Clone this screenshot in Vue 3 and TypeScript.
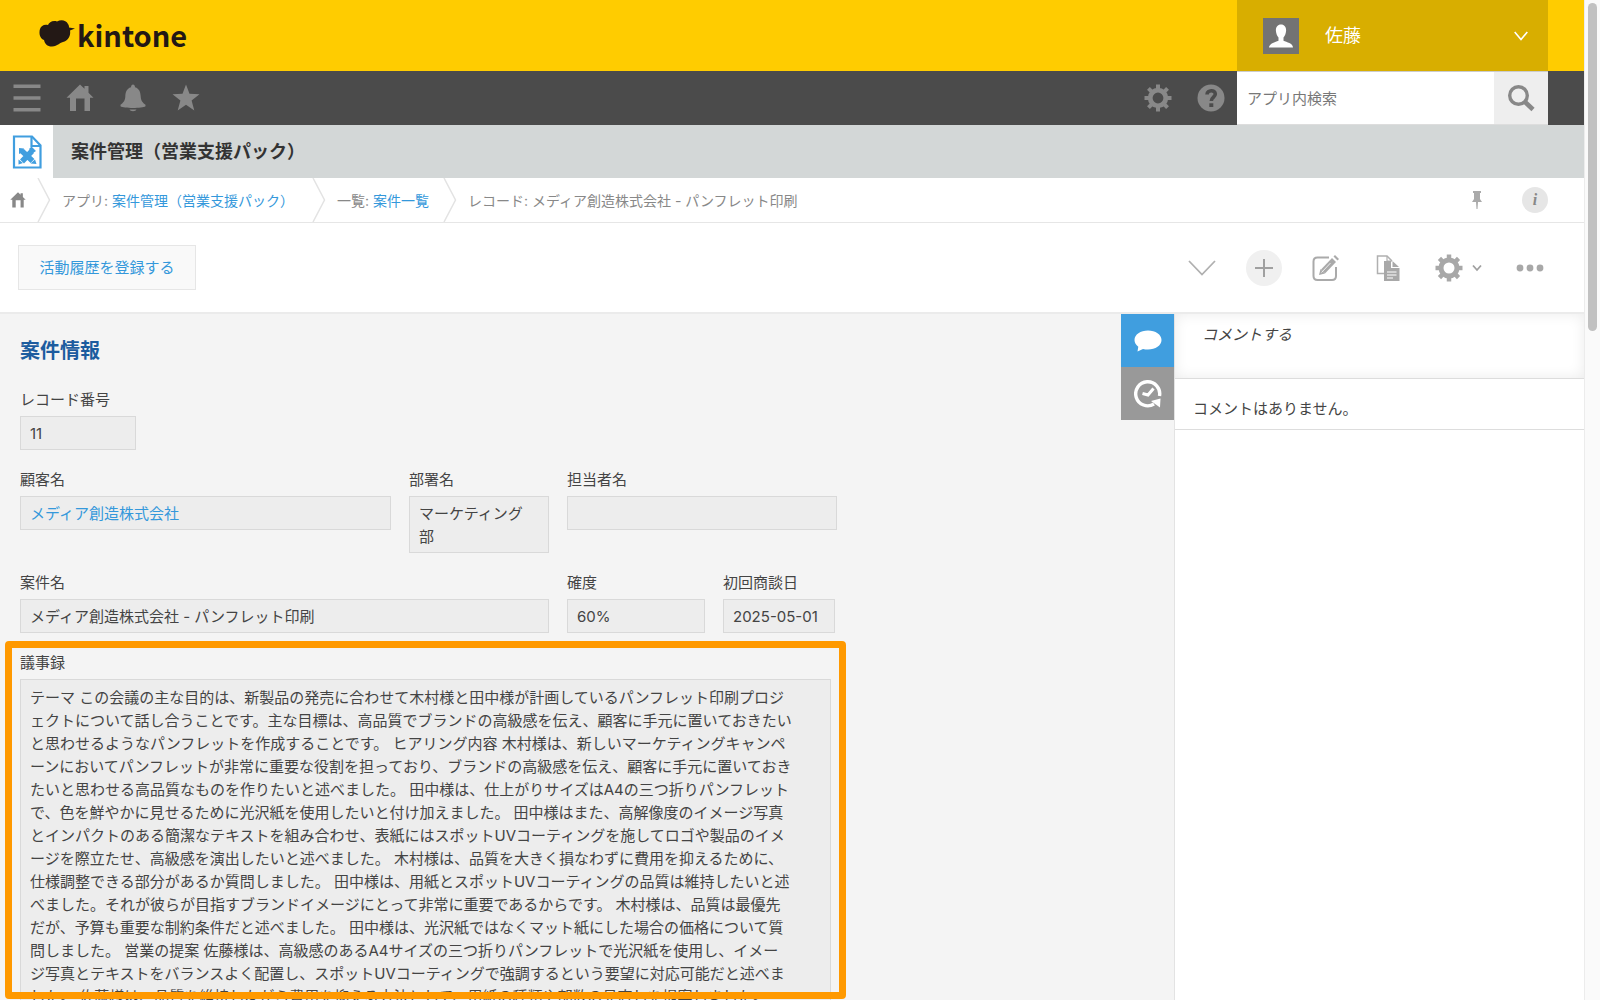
<script setup lang="ts">
import { ref } from 'vue'

interface Field {
  id: string
  label: string
  value: string
  size: string
  link?: boolean
}

const query = ref('')
const comment = ref('')
const teeth = [0, 45, 90, 135, 180, 225, 270, 315]

const rows: Field[][] = [
  [{ id: 'no', label: 'レコード番号', value: '11', size: 'w-number' }],
  [
    { id: 'customer', label: '顧客名', value: 'メディア創造株式会社', size: 'w-customer', link: true },
    { id: 'dept', label: '部署名', value: 'マーケティング部', size: 'w-dept' },
    { id: 'person', label: '担当者名', value: '', size: 'w-person' },
  ],
  [
    { id: 'deal', label: '案件名', value: 'メディア創造株式会社 - パンフレット印刷', size: 'w-deal' },
    { id: 'rate', label: '確度', value: '60%', size: 'w-rate' },
    { id: 'date', label: '初回商談日', value: '2025-05-01', size: 'w-date' },
  ],
]

const minutes: string[] = [
  'テーマ この会議の主な目的は、新製品の発売に合わせて木村様と田中様が計画しているパンフレット印刷プロジ',
  'ェクトについて話し合うことです。主な目標は、高品質でブランドの高級感を伝え、顧客に手元に置いておきたい',
  'と思わせるようなパンフレットを作成することです。 ヒアリング内容 木村様は、新しいマーケティングキャンペ',
  'ーンにおいてパンフレットが非常に重要な役割を担っており、ブランドの高級感を伝え、顧客に手元に置いておき',
  'たいと思わせる高品質なものを作りたいと述べました。 田中様は、仕上がりサイズはA4の三つ折りパンフレット',
  'で、色を鮮やかに見せるために光沢紙を使用したいと付け加えました。 田中様はまた、高解像度のイメージ写真',
  'とインパクトのある簡潔なテキストを組み合わせ、表紙にはスポットUVコーティングを施してロゴや製品のイメ',
  'ージを際立たせ、高級感を演出したいと述べました。 木村様は、品質を大きく損なわずに費用を抑えるために、',
  '仕様調整できる部分があるか質問しました。 田中様は、用紙とスポットUVコーティングの品質は維持したいと述',
  'べました。それが彼らが目指すブランドイメージにとって非常に重要であるからです。 木村様は、品質は最優先',
  'だが、予算も重要な制約条件だと述べました。 田中様は、光沢紙ではなくマット紙にした場合の価格について質',
  '問しました。 営業の提案 佐藤様は、高級感のあるA4サイズの三つ折りパンフレットで光沢紙を使用し、イメー',
  'ジ写真とテキストをバランスよく配置し、スポットUVコーティングで強調するという要望に対応可能だと述べま',
  'した。 佐藤様は、品質を維持しながら費用を抑える方法として、用紙の種類や部数の見直しを提案しました。',
]
</script>

<template>
  <div class="window">
    <div class="page">
      <header class="brand-bar">
        <a class="logo" href="#">
          <svg width="36" height="28" viewBox="0 0 36 28" aria-hidden="true">
            <path fill="#231815" d="M9 5C10 2 14 0 18 1.500C22-.5 27 0 29 4C30 5.500 30 6.500 30 7.500L36 8.500L31 10.500C32 16 29 21 24 22C20 23 19 26 13 26.500C8 26.500 6 24 5 20C0 18 0 12 1 9C2 6 5 4 9 5Z" />
          </svg>
          <span>kintone</span>
        </a>
        <button class="user" type="button">
          <svg class="avatar" width="36" height="36" viewBox="0 0 36 36" aria-hidden="true">
            <rect width="36" height="36" fill="#737373" />
            <path fill="#fff" d="M18 6.500c3.500 0 5.300 2.800 5.100 6.300c-.2 3-1.300 5.300-2.600 6.800v3.200c3.200 1.500 9.300 2.400 9.500 6.700H6c.2-4.300 6.300-5.200 9.500-6.700v-3.200c-1.300-1.500-2.400-3.800-2.600-6.800c-.2-3.500 1.600-6.300 5.100-6.300z" />
          </svg>
          <span class="user-name">佐藤</span>
          <svg width="14" height="10" viewBox="0 0 14 10" fill="none" stroke="#fff" stroke-width="1.600" aria-hidden="true"><path d="M.7 1l6.300 7.500l6.300-7.500" /></svg>
        </button>
      </header>

      <nav class="global-nav">
        <button type="button" aria-label="メニュー">
          <svg width="28" height="28" viewBox="0 0 28 28" stroke="#888" stroke-width="3.600"><path d="M.5 2.300h27M.5 14h27M.5 25.700h27" /></svg>
        </button>
        <button type="button" aria-label="ホーム">
          <svg width="28" height="28" viewBox="0 0 28 28" fill="#888"><path d="M14 .5l4.500 4.300V2h4v6.700l5 5h-3.500V27h-5.500V14.500h-8.500V27H4V13.700H.5z" /></svg>
        </button>
        <button type="button" aria-label="通知">
          <svg width="28" height="28" viewBox="0 0 28 28" fill="#888"><path d="M12 3.200c0-3.600 4-3.600 4 0c4.500 1.300 5.500 5 5.700 9.300c.2 4.500 2 6 4.800 8.300v1.500c-3 2.300-22 2.300-25 0v-1.500c2.800-2.300 4.600-3.800 4.800-8.300C6.500 8.200 7.500 4.500 12 3.200zM10.500 25.500h7c-1 2.300-6 2.300-7 0z" /></svg>
        </button>
        <button type="button" aria-label="お気に入り">
          <svg width="28" height="28" viewBox="0 0 28 28" fill="#888"><path d="M14 .5l3.500 9.300l10 .4l-7.900 6.200l2.700 10.100L14 20.700l-8.300 5.800l2.700-10.100L.5 10.200l10-.4z" /></svg>
        </button>
        <span class="spacer"></span>
        <button type="button" aria-label="設定">
          <svg width="28" height="28" viewBox="0 0 28 28">
            <circle cx="14" cy="14" r="7.800" fill="none" stroke="#888" stroke-width="4.800" />
            <path v-for="a in teeth" :key="a" d="M14 .5v4.500" stroke="#888" stroke-width="4" :transform="`rotate(${a} 14 14)`" />
          </svg>
        </button>
        <button type="button" aria-label="ヘルプ">
          <svg width="28" height="28" viewBox="0 0 28 28"><circle cx="14" cy="14" r="13.500" fill="#888" /><path d="M10 10.500c.2-5 8.300-5 8.300-.5c0 3-4 3.200-4 7" fill="none" stroke="#4b4b4b" stroke-width="3.600" /><path d="M12.300 19.300h4v3.700h-4z" fill="#4b4b4b" /></svg>
        </button>
        <form class="search" role="search" @submit.prevent>
          <input v-model="query" type="text" placeholder="アプリ内検索" aria-label="アプリ内検索" />
          <button type="submit" aria-label="検索">
            <svg width="28" height="28" viewBox="0 0 28 28" fill="none" stroke="#888"><circle cx="11.500" cy="11.500" r="8.800" stroke-width="3.400" /><path d="M17.500 17.500l8.500 8" stroke-width="4.600" /></svg>
          </button>
        </form>
      </nav>

      <div class="app-title">
        <span class="app-icon">
          <svg width="30" height="34" viewBox="0 0 30 34" fill="none" aria-hidden="true">
            <path d="M2 1.500h18l8.500 9v22H2z" fill="#fff" stroke="#409edf" stroke-width="2.200" />
            <path d="M19.500 1.500v9.500h9" stroke="#409edf" stroke-width="2.200" />
            <path d="M10 16l10.500 10M20 16L10 26.500" stroke="#409edf" stroke-width="5.500" />
            <path d="M7 13l5 .5-1 3.500-4 2zM19.500 11.500l4.500 4.500-3 2-4-4zM6.500 24.500l4.500 3.500-4.500 1.500zM18.500 28.500l4.500-4 1.500 4.500z" fill="#409edf" />
          </svg>
        </span>
        <h1>案件管理（営業支援パック）</h1>
      </div>

      <nav class="crumbs" aria-label="パンくず">
        <a class="crumb-home" href="#" aria-label="ホーム">
          <svg width="16" height="16" viewBox="0 0 28 28" fill="#888"><path d="M14 .5l4.500 4.300V2h4v6.700l5 5h-3.500V27h-5.500V14.500h-8.500V27H4V13.700H.5z" /></svg>
        </a>
        <svg class="sep" width="14" height="44" viewBox="0 0 14 44"><path d="M1 0l11.500 22L1 44" fill="none" stroke="#e3e3e3" stroke-width="1.500" /></svg>
        <span class="crumb crumb-app">アプリ: <a href="#">案件管理（営業支援パック）</a></span>
        <svg class="sep" width="14" height="44" viewBox="0 0 14 44"><path d="M1 0l11.500 22L1 44" fill="none" stroke="#e3e3e3" stroke-width="1.500" /></svg>
        <span class="crumb">一覧: <a href="#">案件一覧</a></span>
        <svg class="sep" width="14" height="44" viewBox="0 0 14 44"><path d="M1 0l11.500 22L1 44" fill="none" stroke="#e3e3e3" stroke-width="1.500" /></svg>
        <span class="crumb">レコード: メディア創造株式会社 - パンフレット印刷</span>
        <span class="spacer"></span>
        <button class="pin" type="button" aria-label="固定">
          <svg width="10" height="18" viewBox="0 0 10 18" fill="#aaa"><path d="M1 0h8v2H8v6l2 3H6l-.5 7h-1L4 11H0l2-3V2H1z" /></svg>
        </button>
        <button class="info" type="button" aria-label="情報">i</button>
      </nav>

      <div class="toolbar">
        <button class="register" type="button">活動履歴を登録する</button>
        <span class="spacer"></span>
        <div class="actions">
          <button type="button" aria-label="次のレコード">
            <svg width="28" height="16" viewBox="0 0 28 16" fill="none" stroke="#b0b0b0" stroke-width="1.800"><path d="M1 1l13 13.500L27 1" /></svg>
          </button>
          <button class="add" type="button" aria-label="レコードを追加">
            <svg width="18" height="18" viewBox="0 0 18 18" stroke="#a0a0a0" stroke-width="2"><path d="M9 0v18M0 9h18" /></svg>
          </button>
          <button type="button" aria-label="編集">
            <svg width="28" height="28" viewBox="0 0 28 28" fill="none" stroke="#aaa"><path d="M17 3.500H5.500q-4 0-4 4V22q0 4 4 4H20q4 0 4-4V13" stroke-width="2" /><path d="M11 17.500L22 6" stroke-width="5.500" /><path d="M7 21l1.500-6 4.500 4.500z" fill="#aaa" stroke="none" /><path d="M23 1l4 4-1.500 1.500-4-4z" fill="#aaa" stroke="none" /><path d="M9.500 18.500l9-9.500" stroke="#fff" stroke-width=".8" /></svg>
          </button>
          <button type="button" aria-label="複製">
            <svg width="24" height="26" viewBox="0 0 24 26"><path d="M8 18.500H1.500V1h9.500l5 5" fill="none" stroke="#b0b0b0" stroke-width="1.500" /><path d="M11 1v5h5" fill="none" stroke="#b0b0b0" stroke-width="1.200" /><path d="M8 6h7v7h8.500v13H8z" fill="#a8a8a8" /><path d="M16.500 6l6.500 6h-6.500z" fill="#a8a8a8" /><path d="M11 17h9.500M11 20h9.500M11 23h6" stroke="#fff" stroke-width="1" /></svg>
          </button>
          <button class="settings" type="button" aria-label="アプリの設定">
            <svg width="28" height="28" viewBox="0 0 28 28">
              <circle cx="14" cy="14" r="8" fill="none" stroke="#a8a8a8" stroke-width="5" />
              <path v-for="a in teeth" :key="a" d="M14 .5v4.500" stroke="#a8a8a8" stroke-width="4.500" :transform="`rotate(${a} 14 14)`" />
            </svg>
            <svg width="10" height="8" viewBox="0 0 10 8" fill="none" stroke="#a0a0a0" stroke-width="1.800"><path d="M1 1.500l4 4.500l4-4.500" /></svg>
          </button>
          <button type="button" aria-label="その他">
            <svg width="28" height="8" viewBox="0 0 28 8" fill="#a8a8a8"><circle cx="4" cy="4" r="3.400" /><circle cx="14" cy="4" r="3.400" /><circle cx="24" cy="4" r="3.400" /></svg>
          </button>
        </div>
      </div>

      <div class="body">
        <main class="record">
          <h2>案件情報</h2>
          <div v-for="(row, i) in rows" :key="i" class="row">
            <div v-for="f in row" :key="f.id" class="field" :class="f.size">
              <div class="label">{{ f.label }}</div>
              <div class="value"><a v-if="f.link" href="#">{{ f.value }}</a><template v-else>{{ f.value }}</template></div>
            </div>
          </div>
          <div class="memo">
            <div class="label">議事録</div>
            <div class="value memo-text">
              <div v-for="(line, i) in minutes" :key="i">{{ line }}</div>
            </div>
            <div class="frame"></div>
          </div>
        </main>

        <div class="tabs">
          <button class="tab active" type="button" aria-label="コメント">
            <svg width="28" height="22" viewBox="0 0 28 22" fill="#fff"><path d="M14 .5c7.500 0 13.500 4.100 13.500 9.500s-6 9.500-13.500 9.500c-1.800 0-3.500-.2-5-.6L3.500 21.500l.8-4.700C2 15 .5 12.700.5 10C.5 4.600 6.500.5 14 .5z" /></svg>
          </button>
          <button class="tab" type="button" aria-label="変更履歴">
            <svg width="28" height="30" viewBox="0 0 28 30" fill="none" stroke="#fff"><path d="M25.500 17A12 12 0 1 0 20 25" stroke-width="3.400" /><path d="M17 22l9.500-2.500L26 28.500z" fill="#fff" stroke="none" /><path d="M8.500 14.500l5.500 1.500 5.500-6.500" stroke-width="3" /></svg>
          </button>
        </div>

        <aside class="comments">
          <textarea v-model="comment" placeholder="コメントする" aria-label="コメントする"></textarea>
          <p>コメントはありません。</p>
        </aside>
      </div>
    </div>
    <div class="scrollbar"><div class="thumb"></div></div>
  </div>
</template>

<style>
body {
  margin: 0;
}
</style>

<style scoped>
* {
  box-sizing: border-box;
}
.window {
  display: flex;
  height: 100vh;
  overflow: hidden;
  background: #fff;
  color: #444;
  font: 15px/23px Inter, "Noto Sans CJK JP", sans-serif;
}
button,
input,
textarea {
  font: inherit;
  color: inherit;
  border: 0;
  padding: 0;
  margin: 0;
  background: none;
  border-radius: 0;
  outline: 0;
}
button {
  display: flex;
  align-items: center;
  justify-content: center;
  flex: none;
}
svg {
  display: block;
  flex: none;
}
a {
  color: #3498db;
  text-decoration: none;
}
.spacer {
  flex: 1;
}
.page {
  flex: 1;
  min-width: 0;
  display: flex;
  flex-direction: column;
}
.scrollbar {
  width: 16px;
  flex: none;
  padding: 3px;
  background: #fafafa;
  border-left: 1px solid #ececec;
}
.thumb {
  width: 9px;
  height: 33%;
  border-radius: 5px;
  background: #c1c1c1;
}

.brand-bar {
  display: flex;
  flex: none;
  align-items: stretch;
  justify-content: space-between;
  height: 71px;
  padding: 0 36px 0 39px;
  background: #ffcc00;
}
.logo {
  display: flex;
  align-items: center;
  gap: 2px;
  padding-bottom: 3px;
  color: #231815;
  font: 700 29px/36px "Noto Sans CJK JP", sans-serif;
}
.user {
  width: 311px;
  padding: 0 20px 0 26px;
  background: #d8ae00;
  color: #fff;
}
.user-name {
  flex: 1;
  padding-left: 26px;
  text-align: left;
  font-size: 18px;
}

.global-nav {
  display: flex;
  flex: none;
  height: 54px;
  padding-right: 36px;
  background: #4b4b4b;
}
.global-nav > button {
  width: 53px;
}
.search {
  display: flex;
  width: 311px;
  border-top: 1px solid #ccc;
  border-bottom: 1px solid #ddd;
  background: #fff;
}
.search input {
  flex: 1;
  min-width: 0;
  padding: 0 10px;
}
.search input::placeholder {
  color: #777;
  opacity: 1;
}
.search button {
  width: 54px;
  background: #eee;
}

.app-title {
  display: flex;
  flex: none;
  height: 53px;
  align-items: center;
  background: #d3d7d7;
}
.app-icon {
  display: flex;
  align-items: center;
  justify-content: center;
  width: 53px;
  height: 53px;
  background: #fff;
}
h1 {
  margin: 0 0 0 18px;
  font-size: 18px;
  line-height: 24px;
  color: #333;
}

.crumbs {
  display: flex;
  flex: none;
  align-items: center;
  height: 45px;
  padding-right: 36px;
  border-bottom: 1px solid #e6e6e6;
  font-size: 14px;
  color: #888;
}
.crumb-home {
  width: 37px;
  padding-left: 10px;
}
.crumb {
  padding: 0 14px 0 11px;
}
.crumb-app {
  padding-right: 18px;
}
.info {
  width: 26px;
  height: 26px;
  margin-left: 40px;
  border-radius: 50%;
  background: #e6e6e6;
  font: italic 700 16px/26px "Liberation Serif", serif;
  color: #888;
}

.toolbar {
  display: flex;
  flex: none;
  align-items: center;
  height: 91px;
  padding: 0 36px 0 18px;
  border-bottom: 2px solid #ebebeb;
}
.register {
  width: 178px;
  height: 45px;
  border: 1px solid #e6e6e6;
  background: #f9f9f9;
  color: #3498db;
}
.actions {
  display: flex;
  gap: 26px;
}
.actions button {
  width: 36px;
  height: 36px;
}
.actions .add {
  border-radius: 50%;
  background: #f0f0f0;
}
.actions .settings {
  width: 54px;
  justify-content: space-between;
  padding: 0 4px 0 3px;
}

.body {
  display: flex;
  flex: 1;
  min-height: 0;
  background: #f4f4f4;
}
.record {
  display: flex;
  flex: 1;
  flex-direction: column;
  min-width: 0;
  padding: 24px 0 0 20px;
}
h2 {
  margin: 0 0 24px;
  font-size: 20px;
  line-height: 26px;
  color: #1c5c9f;
}
.row {
  display: flex;
  flex: none;
  align-items: flex-start;
  gap: 18px;
  margin-bottom: 18px;
}
.label {
  margin-bottom: 5px;
}
.value {
  min-height: 34px;
  padding: 5px 9px 4px;
  border: 1px solid #d9d9d9;
  background: #ededed;
}
.w-number {
  width: 116px;
}
.w-customer {
  width: 371px;
}
.w-dept {
  width: 140px;
}
.w-dept .value {
  padding-right: 12px;
}
.w-person {
  width: 270px;
}
.w-deal {
  width: 529px;
}
.w-rate {
  width: 138px;
}
.w-date {
  width: 112px;
}
.memo {
  position: relative;
  flex: 1;
  min-height: 0;
  width: 811px;
}
.memo-text {
  padding-top: 6px;
  white-space: nowrap;
}
.frame {
  position: absolute;
  inset: -10px -15px 1px -15px;
  border: 7px solid #ff9900;
  border-radius: 4px;
}

.tabs {
  flex: none;
}
.tab {
  width: 53px;
  height: 53px;
  background: #999;
}
.tab.active {
  background: #409edf;
}
.comments {
  flex: none;
  width: 410px;
  background: #fff;
  border-left: 1px solid #e3e3e3;
}
.comments textarea {
  display: block;
  width: 100%;
  height: 65px;
  padding: 9px 27px;
  border-bottom: 1px solid #ddd;
  box-shadow: inset 0 0 14px #ebebeb;
  resize: none;
}
.comments textarea::placeholder {
  color: #444;
  font-style: italic;
  opacity: 1;
}
.comments p {
  margin: 0;
  padding: 18px 18px 9px;
  border-bottom: 1px solid #ddd;
}
</style>
